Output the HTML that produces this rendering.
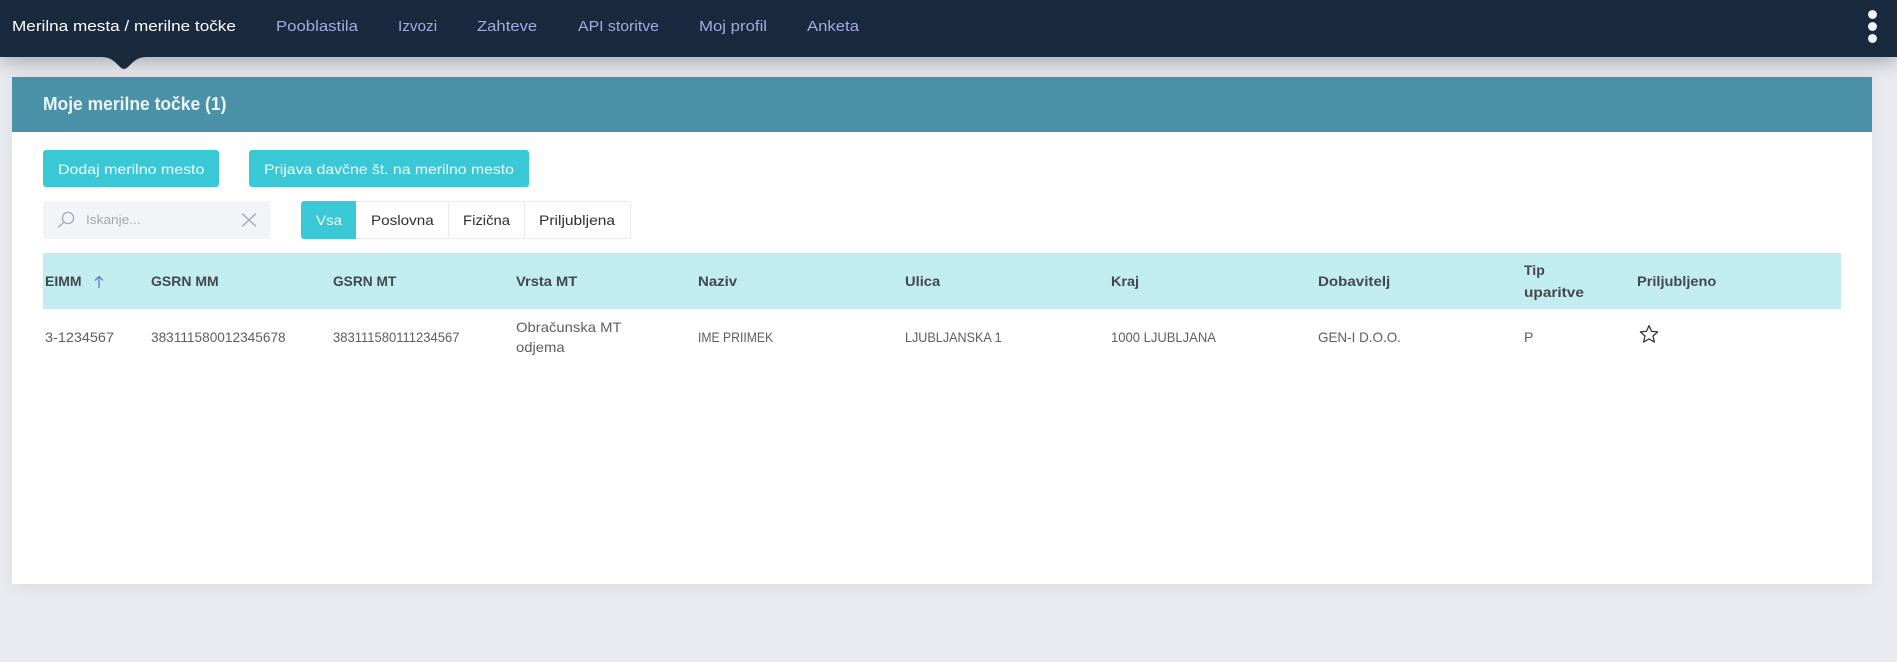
<!DOCTYPE html>
<html lang="sl">
<head>
<meta charset="utf-8">
<title>Moje merilne točke</title>
<style>
html,body{margin:0;padding:0;width:1897px;height:662px;overflow:hidden;background:#eaebf0;font-family:"Liberation Sans",sans-serif}
.a{position:absolute}
.t{position:absolute;white-space:nowrap;line-height:20px;height:20px;transform-origin:0 50%;font-size:14px}
nav{position:absolute;left:0;top:0;width:1897px;height:57px;background:#19293e;box-shadow:0 4px 20px rgba(40,40,60,.38);z-index:2}
nav .t{font-size:15px;color:#a8a9e2;top:17px}
.dot{position:absolute;left:1867.5px;width:9px;height:9px;border-radius:50%;background:#eef1f8}
.panel{position:absolute;left:12px;top:77px;width:1860px;height:507px;background:#fff;box-shadow:0 2px 14px rgba(60,60,80,.09)}
.bar{position:absolute;left:12px;top:77px;width:1860px;height:55px;background:#4b91a8}
.btn{position:absolute;top:150px;height:37px;background:#3bc8d6;border-radius:3px}
.btn-t{color:#f2fcfd;top:159px}
.search{position:absolute;left:43px;top:201px;width:228px;height:38px;background:#f3f4f8;border-radius:3px}
.seg{position:absolute;top:201px;height:36px;border:1px solid #e9eaef;border-left:0;background:#fff}
.head{position:absolute;left:43px;top:253px;width:1798px;height:56px;background:#c1edf0}
.h{font-weight:bold;color:#45474f}
.c{color:#5e5e62}
</style>
</head>
<body>
<nav>
  <span class="t" style="left:12px;color:#fff;transform:scaleX(1.143)">Merilna mesta / merilne točke</span>
  <span class="t" style="left:276px;transform:scaleX(1.117)">Pooblastila</span>
  <span class="t" style="left:398px;transform:scaleX(1.02)">Izvozi</span>
  <span class="t" style="left:477px;transform:scaleX(1.11)">Zahteve</span>
  <span class="t" style="left:578px;transform:scaleX(1.056)">API storitve</span>
  <span class="t" style="left:699px;transform:scaleX(1.118)">Moj profil</span>
  <span class="t" style="left:807px;transform:scaleX(1.113)">Anketa</span>
  <i class="dot" style="top:9.5px"></i><i class="dot" style="top:21.5px"></i><i class="dot" style="top:33.5px"></i>
</nav>
<svg class="a" style="left:100px;top:57px;z-index:3" width="48" height="13" viewBox="0 0 48 13"><path d="M1 0C9 0 13 3 17 7C20 10 22 12 24 12C26 12 28 10 31 7C35 3 39 0 47 0Z" fill="#19293e"/></svg>

<div class="panel"></div>
<div class="bar"></div>
<span class="t" style="left:43px;top:94px;font-size:18px;font-weight:bold;color:#edf5f7;transform:scaleX(.97)">Moje merilne točke (1)</span>

<div class="btn" style="left:43px;width:176px"></div>
<span class="t btn-t" style="left:58px;transform:scaleX(1.14)">Dodaj merilno mesto</span>
<div class="btn" style="left:249px;width:280px"></div>
<span class="t btn-t" style="left:264px;transform:scaleX(1.127)">Prijava davčne št. na merilno mesto</span>

<div class="search"></div>
<svg class="a" style="left:56px;top:211px" width="20" height="18" viewBox="0 0 20 18" fill="none" stroke="#a5a4b8" stroke-width="1.3"><circle cx="12" cy="7" r="5.6"/><path d="M8 11.2L2 16.5"/></svg>
<span class="t" style="left:86px;top:210px;font-size:13px;color:#a4a6af;transform:scaleX(1.05)">Iskanje...</span>
<svg class="a" style="left:241px;top:212px" width="16" height="16" viewBox="0 0 16 16" fill="none" stroke="#a3a8b8" stroke-width="1.3"><path d="M1 1.5L15 14.5M15 1.5L1 14.5"/></svg>

<div class="seg" style="left:301px;width:55px;background:#3bc8d6;border-color:#3bc8d6;border-radius:3px 0 0 3px"></div>
<div class="seg" style="left:356px;width:92px"></div>
<div class="seg" style="left:449px;width:75px"></div>
<div class="seg" style="left:525px;width:105px;border-radius:0 3px 3px 0"></div>
<span class="t" style="left:316px;top:210px;color:#f2fcfd;transform:scaleX(1.08)">Vsa</span>
<span class="t" style="left:371px;top:210px;color:#2e2e33;transform:scaleX(1.09)">Poslovna</span>
<span class="t" style="left:463px;top:210px;color:#2e2e33;transform:scaleX(1.06)">Fizična</span>
<span class="t" style="left:539px;top:210px;color:#2e2e33;transform:scaleX(1.11)">Priljubljena</span>

<div class="head"></div>
<span class="t h" style="left:45px;top:271px">EIMM</span>
<svg class="a" style="left:94px;top:275px" width="10" height="14" viewBox="0 0 10 14" fill="none" stroke="#5a5fc4" stroke-width="1.1"><path d="M5 13V1.5M1 5.5L5 1.5L9 5.5"/></svg>
<span class="t h" style="left:151px;top:271px">GSRN MM</span>
<span class="t h" style="left:333px;top:271px;transform:scaleX(.98)">GSRN MT</span>
<span class="t h" style="left:516px;top:271px;transform:scaleX(1.05)">Vrsta MT</span>
<span class="t h" style="left:698px;top:271px;transform:scaleX(1.07)">Naziv</span>
<span class="t h" style="left:905px;top:271px;transform:scaleX(1.05)">Ulica</span>
<span class="t h" style="left:1111px;top:271px;transform:scaleX(1.03)">Kraj</span>
<span class="t h" style="left:1318px;top:271px;transform:scaleX(1.08)">Dobavitelj</span>
<span class="t h" style="left:1524px;top:260px">Tip</span>
<span class="t h" style="left:1524px;top:282px;transform:scaleX(1.1)">uparitve</span>
<span class="t h" style="left:1637px;top:271px;transform:scaleX(1.04)">Priljubljeno</span>

<span class="t c" style="left:45px;top:327px;transform:scaleX(1.03)">3-1234567</span>
<span class="t c" style="left:151px;top:327px;transform:scaleX(.975)">383111580012345678</span>
<span class="t c" style="left:333px;top:327px;transform:scaleX(.93)">383111580111234567</span>
<span class="t c" style="left:516px;top:317px;transform:scaleX(1.06)">Obračunska MT</span>
<span class="t c" style="left:516px;top:337px;transform:scaleX(1.06)">odjema</span>
<span class="t c" style="left:698px;top:327px;transform:scaleX(.87)">IME PRIIMEK</span>
<span class="t c" style="left:905px;top:327px;transform:scaleX(.9)">LJUBLJANSKA 1</span>
<span class="t c" style="left:1111px;top:327px;transform:scaleX(.93)">1000 LJUBLJANA</span>
<span class="t c" style="left:1318px;top:327px;transform:scaleX(.96)">GEN-I D.O.O.</span>
<span class="t c" style="left:1524px;top:327px">P</span>
<svg class="a" style="left:1639px;top:324px" width="20" height="20" viewBox="0 0 20 20" fill="none" stroke="#2c2c30" stroke-width="1.2" stroke-linejoin="round"><path d="M10 1.6L12.5 7.3L18.6 7.9L14 12L15.4 18.1L10 14.9L4.6 18.1L6 12L1.4 7.9L7.5 7.3Z"/></svg>
</body>
</html>
